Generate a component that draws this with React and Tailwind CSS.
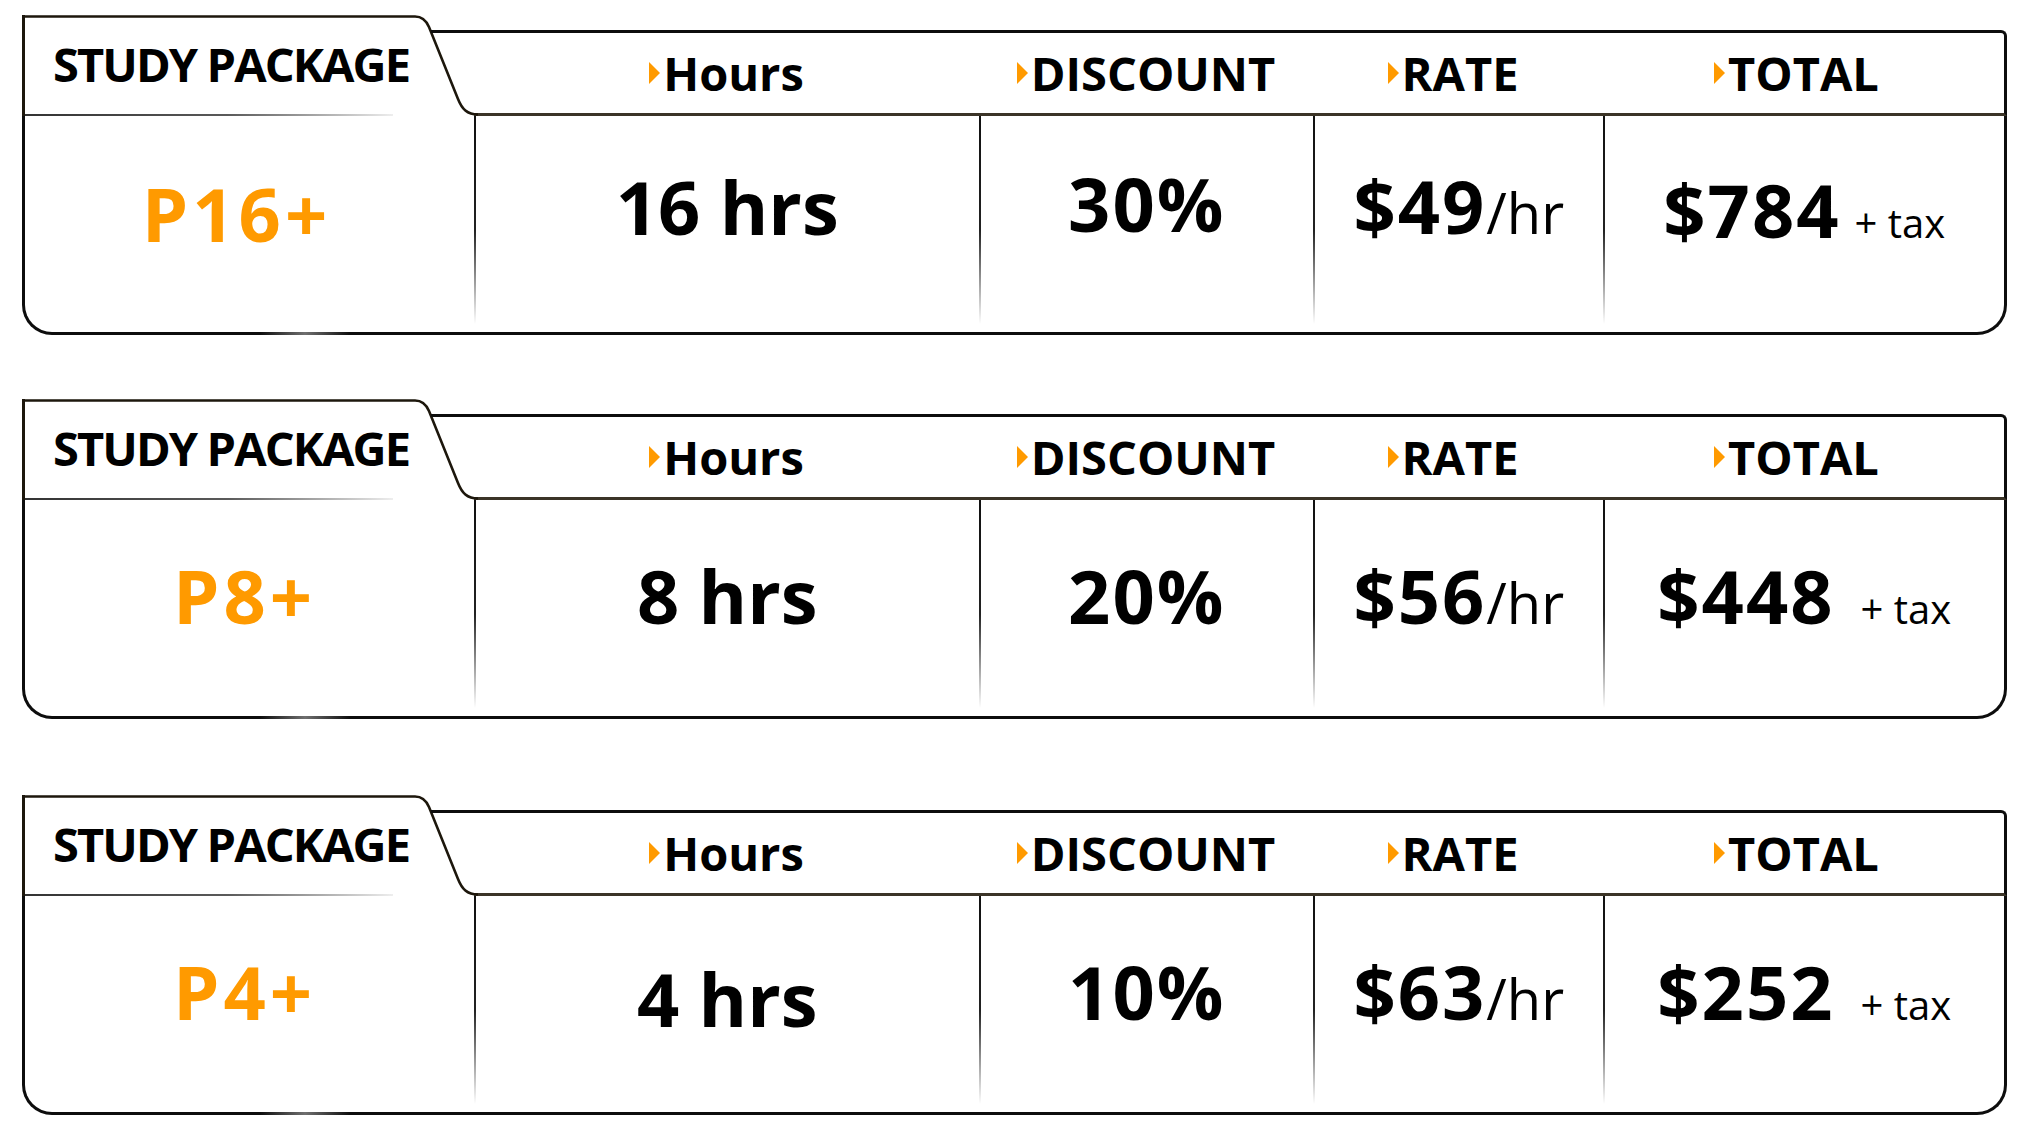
import React from 'react';

/* ---------- data ---------- */
const packages = [
  {
    name: 'P16+',
    nameShift: 'pr-[26px]',
    hours: '16 hrs',
    discount: '30%',
    rate: '$49',
    total: '$784',
    gap: 'ml-[14px]',
    wrap: '',
    dy: ['translate-y-[2px]', '-translate-y-[5px]', '-translate-y-[8px]', '-translate-y-[6px]', '-translate-y-[2px]'],
  },
  {
    name: 'P8+',
    nameShift: 'pr-[10px]',
    hours: '8 hrs',
    discount: '20%',
    rate: '$56',
    total: '$448',
    gap: 'ml-[26px]',
    wrap: 'mt-[64px]',
    dy: ['', '', '', '', ''],
  },
  {
    name: 'P4+',
    nameShift: 'pr-[10px]',
    hours: '4 hrs',
    discount: '10%',
    rate: '$63',
    total: '$252',
    gap: 'ml-[26px]',
    wrap: 'mt-[76px]',
    dy: ['', 'translate-y-[7px]', '', '', ''],
  },
];

const font = "font-['Open_Sans','Noto_Sans',sans-serif]";

/* ---------- bits ---------- */
function Arrow() {
  return (
    <svg width="11" height="22" viewBox="0 0 11 22" className="shrink-0">
      <polygon points="0,0 11,11 0,22" fill="#ff9a00" />
    </svg>
  );
}

function HeadLabel({ children, className }) {
  return (
    <div className={`flex items-center justify-center gap-[3px] ${className}`}>
      <Arrow />
      <span className="text-[47px] font-bold leading-none text-black">{children}</span>
    </div>
  );
}

function Divider() {
  return <div className="mb-[8px] w-[1.5px] shrink-0 self-stretch bg-linear-to-b from-[#111] via-[#222] via-55% to-transparent" />;
}

/* ---------- card ---------- */
function PackageCard({ p }) {
  return (
    <div className={`relative w-[1985px] ${p.wrap}`}>
      {/* header row */}
      <div className="flex h-[101px]">
        {/* tab */}
        <div className="relative flex w-[452px] shrink-0 flex-col border-l-[3px] border-[#1d170c]">
          <svg className="absolute left-[-3px] top-0 overflow-visible" width="458" height="101" viewBox="0 0 458 101">
            <path
              d="M0 1.5 H393 C400 1.5 404 5 407 12 L436 84 C440 94 445 99.5 456 99.5"
              fill="none"
              stroke="#1d170c"
              strokeWidth="2.6"
            />
            <path d="M409 16.5 H458" fill="none" stroke="#0d0d0d" strokeWidth="3" />
          </svg>
          <div className="flex flex-1 items-center pl-[28px]">
            <span className="text-[47px] font-bold leading-none tracking-[-1.9px] text-black">STUDY PACKAGE</span>
          </div>
          <div className="h-[2px] w-[368px] bg-linear-to-r from-[#333] via-[#5a5a5a] via-55% to-[#eeeeee]" />
        </div>

        {/* column heads */}
        <div className="mt-[15px] flex flex-1 rounded-tr-[6px] border-t-[3px] border-r-[3px] border-b-[3px] border-t-[#0d0d0d] border-r-[#0d0d0d] border-b-[#3b3427]">
          <HeadLabel className="w-[505px]">Hours</HeadLabel>
          <HeadLabel className="w-[334px]">DISCOUNT</HeadLabel>
          <HeadLabel className="w-[280px]">RATE</HeadLabel>
          <HeadLabel className="flex-1 pr-[4px]">TOTAL</HeadLabel>
        </div>
      </div>

      {/* body row */}
      <div className="relative flex h-[219px] rounded-b-[30px] border-x-[3px] border-b-[3px] border-[#0d0d0d]">
        <div className={`flex w-[449px] items-center justify-center pb-[24px] ${p.nameShift} ${p.dy[0]}`}>
          <span className="text-[74px] font-bold leading-none tracking-[4px] text-[#ff9a00]">{p.name}</span>
        </div>
        <Divider />
        <div className={`flex w-[503.5px] items-center justify-center pb-[24px] ${p.dy[1]}`}>
          <span className="text-[74px] font-bold leading-none text-black">{p.hours}</span>
        </div>
        <Divider />
        <div className={`flex w-[332.5px] items-center justify-center pb-[24px] ${p.dy[2]}`}>
          <span className="text-[74px] font-bold leading-none tracking-[2px] text-black">{p.discount}</span>
        </div>
        <Divider />
        <div className={`flex w-[288.5px] items-center justify-center pb-[24px] ${p.dy[3]}`}>
          <div className="flex items-baseline leading-none text-black">
            <span className="text-[74px] font-bold tracking-[2px]">{p.rate}</span>
            <span className="text-[56px] font-normal">/hr</span>
          </div>
        </div>
        <Divider />
        <div className={`flex flex-1 items-center justify-center pb-[24px] ${p.dy[4]}`}>
          <div className="flex items-baseline leading-none text-black">
            <span className="text-[74px] font-bold tracking-[2px]">{p.total}</span>
            <span className={`text-[40px] font-normal ${p.gap}`}>+ tax</span>
          </div>
        </div>
        {/* soft highlight on the bottom edge */}
        <div className="absolute bottom-[-3px] left-[235px] h-[3px] w-[90px] bg-linear-to-r from-transparent via-[#6f6f6f] to-transparent" />
      </div>
    </div>
  );
}

/* ---------- page ---------- */
export default function App() {
  return (
    <div className={`min-h-screen w-[2020px] bg-white pl-[22px] pt-[15px] ${font}`}>
      <div className="flex flex-col">
        {packages.map((p) => (
          <PackageCard key={p.name} p={p} />
        ))}
      </div>
    </div>
  );
}
